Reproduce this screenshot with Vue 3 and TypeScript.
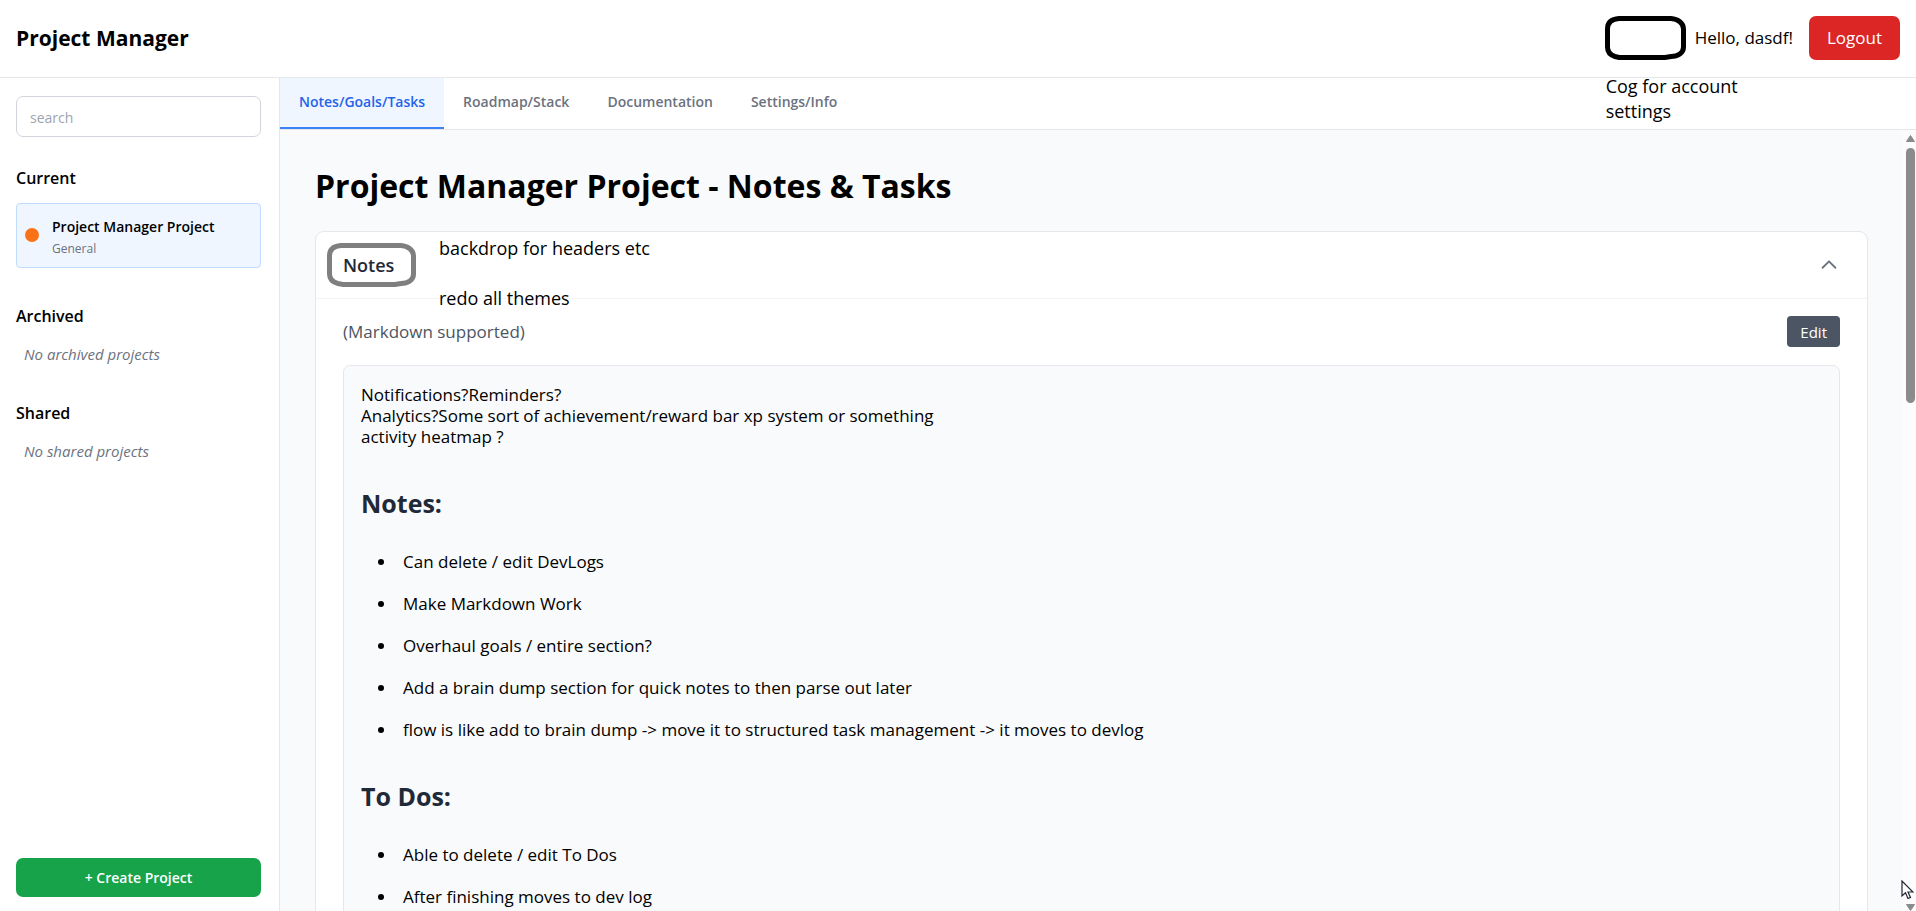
<script setup lang="ts">
import { ref } from 'vue'

interface Section {
  title: string
  items: string[]
}

const tabs = ['Notes/Goals/Tasks', 'Roadmap/Stack', 'Documentation', 'Settings/Info']
const activeTab = ref(tabs[0])
const search = ref('')
const notesOpen = ref(true)

const intro = [
  'Notifications?Reminders?',
  'Analytics?Some sort of achievement/reward bar xp system or something',
  'activity heatmap ?',
]

const sections: Section[] = [
  {
    title: 'Notes:',
    items: [
      'Can delete / edit DevLogs',
      'Make Markdown Work',
      'Overhaul goals / entire section?',
      'Add a brain dump section for quick notes to then parse out later',
      'flow is like add to brain dump -> move it to structured task management -> it moves to devlog',
    ],
  },
  {
    title: 'To Dos:',
    items: ['Able to delete / edit To Dos', 'After finishing moves to dev log'],
  },
]
</script>

<template>
  <div class="app">
    <header class="topbar">
      <h1 class="brand">Project Manager</h1>
      <div class="account">
        <div class="cog-slot">
          <svg class="sketch" viewBox="0 0 81 44" aria-hidden="true">
            <path d="M14 2.5H66C73 3 78.500 7 78.500 13V31C78.500 37 73 40.500 66 40.500L60 41.500H14L10 40.500C5 39 2.500 36 2.500 31V13C2.500 6 7 3 14 2.500Z" fill="none" stroke="#000" stroke-width="5" />
          </svg>
          <p class="annotation cog-note">Cog for account<br />settings</p>
        </div>
        <span class="hello">Hello, dasdf!</span>
        <button type="button" class="logout">Logout</button>
      </div>
    </header>

    <div class="body">
      <aside class="sidebar">
        <input v-model="search" class="search" type="search" placeholder="search" aria-label="search" />

        <section class="group">
          <h2 class="group-title">Current</h2>
          <button type="button" class="project">
            <span class="dot"></span>
            <span class="project-text">
              <span class="project-name">Project Manager Project</span>
              <span class="project-kind">General</span>
            </span>
          </button>
        </section>
        <section class="group">
          <h2 class="group-title">Archived</h2>
          <p class="empty">No archived projects</p>
        </section>
        <section class="group">
          <h2 class="group-title">Shared</h2>
          <p class="empty">No shared projects</p>
        </section>

        <button type="button" class="create">+ Create Project</button>
      </aside>

      <div class="workspace">
        <nav class="tabs">
          <button
            v-for="tab in tabs"
            :key="tab"
            type="button"
            class="tab"
            :class="{ active: tab === activeTab }"
            @click="activeTab = tab"
          >
            {{ tab }}
          </button>
        </nav>

        <div class="scroller">
          <main class="content">
            <h2 class="page-title">Project Manager Project - Notes &amp; Tasks</h2>

            <section class="card">
              <div class="card-head">
                <div class="card-label">
                  <h3 class="card-title">Notes</h3>
                  <svg class="sketch backdrop" viewBox="0 0 89 44" aria-hidden="true">
                    <path d="M14 2.5H74C81 3 86.500 7 86.500 13V31C86.500 37 81 40.500 74 40.500L68 41.500H16L11 40.500C5 39 2.500 36 2.500 31V13C2.500 6 7 3 14 2.500Z" fill="none" stroke="#7f7f7f" stroke-width="5" />
                  </svg>
                  <p class="annotation backdrop-note">backdrop for headers etc<br /><br />redo all themes</p>
                </div>
                <button type="button" class="toggle" aria-label="Toggle notes" @click="notesOpen = !notesOpen">
                  <svg viewBox="0 0 24 24" width="22" height="22" fill="none" stroke="#6b7280" stroke-width="2" stroke-linecap="round" stroke-linejoin="round">
                    <path d="M5 15l7-7 7 7" />
                  </svg>
                </button>
              </div>

              <div v-if="notesOpen" class="card-body">
                <div class="hint-row">
                  <span class="hint">(Markdown supported)</span>
                  <button type="button" class="edit">Edit</button>
                </div>
                <article class="markdown">
                  <p class="intro">
                    <template v-for="line in intro" :key="line">{{ line }}<br /></template>
                  </p>
                  <template v-for="section in sections" :key="section.title">
                    <h4>{{ section.title }}</h4>
                    <ul>
                      <li v-for="item in section.items" :key="item">{{ item }}</li>
                    </ul>
                  </template>
                </article>
              </div>
            </section>
          </main>

          <div class="scrollbar" aria-hidden="true">
            <svg width="9" height="7" viewBox="0 0 9 7"><path d="M4.5 0.5L8.5 6.5H0.5Z" fill="#8b8b8b" stroke="#8b8b8b" stroke-linejoin="round" /></svg>
            <div class="track"><div class="thumb"></div></div>
            <svg width="9" height="7" viewBox="0 0 9 7"><path d="M4.5 6.5L8.5 0.5H0.5Z" fill="#8b8b8b" stroke="#8b8b8b" stroke-linejoin="round" /></svg>
          </div>
        </div>
      </div>
    </div>

    <svg class="pointer" width="13" height="20" viewBox="0 0 13 20" aria-hidden="true">
      <path d="M1 1V16L4.5 12.8L7 18.5L9.5 17.4L7 12H12Z" fill="#fff" stroke="#1f2430" stroke-width="1.2" />
    </svg>
  </div>
</template>

<style>
body {
  margin: 0;
}
</style>

<style scoped>
.app {
  position: relative;
  display: flex;
  flex-direction: column;
  height: 100vh;
  overflow: hidden;
  background: #fff;
  color: #000;
  font-family: "Open Sans", "Noto Sans", sans-serif;
  font-size: 17px;
  line-height: 26px;
}
.app *,
.app {
  box-sizing: border-box;
}
h1,
h2,
h3,
h4,
p,
ul {
  margin: 0;
  padding: 0;
}
button {
  margin: 0;
  border: 0;
  background: none;
  color: inherit;
  font: inherit;
  cursor: pointer;
}

.topbar {
  display: flex;
  align-items: center;
  justify-content: space-between;
  padding: 16px 16px 17px;
  border-bottom: 1px solid #e5e7eb;
}
.brand {
  font-size: 21px;
  line-height: 30px;
  font-weight: 700;
}
.account {
  display: flex;
  align-items: center;
}
.cog-slot {
  position: relative;
  width: 81px;
  height: 44px;
}
.sketch {
  display: block;
  width: 100%;
  height: 100%;
}
.annotation {
  position: absolute;
  font-size: 18px;
  line-height: 25px;
  white-space: nowrap;
}
.cog-note {
  top: 58px;
  left: 1px;
}
.hello {
  margin: 0 16px 0 9px;
}
.logout {
  height: 44px;
  padding: 0 18px;
  border-radius: 7px;
  background: #dc2626;
  color: #fff;
}

.body {
  flex: 1;
  display: flex;
  min-height: 0;
}
.sidebar {
  flex: none;
  display: flex;
  flex-direction: column;
  width: 280px;
  padding: 18px 18px 14px 16px;
  border-right: 1px solid #e5e7eb;
}
.search {
  width: 100%;
  height: 41px;
  margin-bottom: 27px;
  padding: 1px 13px 0;
  border: 1px solid #d1d5db;
  border-radius: 7px;
  outline: 0;
  background: #fff;
  font: 14px/20px "Open Sans", "Noto Sans", sans-serif;
  appearance: none;
}
.search::placeholder {
  color: #9ca3af;
}
.group {
  margin-bottom: 34px;
}
.group-title {
  margin-bottom: 11px;
  font-size: 16px;
  line-height: 28px;
  font-weight: 600;
}
.group + .group .group-title {
  margin-bottom: 6px;
}
.project {
  display: flex;
  align-items: center;
  gap: 13px;
  width: 100%;
  padding: 11px 8px 8px;
  border: 1px solid #bfdbfe;
  border-radius: 4px;
  background: #eff6ff;
  text-align: left;
}
.dot {
  width: 14px;
  height: 14px;
  margin-bottom: 4px;
  border-radius: 50%;
  background: #f97316;
}
.project-text {
  display: flex;
  flex-direction: column;
}
.project-name {
  font-size: 14px;
  line-height: 24px;
  font-weight: 600;
}
.project-kind {
  color: #6b7280;
  font-size: 12px;
  line-height: 20px;
}
.empty {
  padding: 8px;
  color: #6b7280;
  font-size: 15px;
  line-height: 20px;
  font-style: italic;
}
.group + .group {
  margin-bottom: 27px;
}
.create {
  height: 39px;
  margin-top: auto;
  border-radius: 7px;
  background: #16a34a;
  color: #fff;
  font-size: 14px;
  font-weight: 600;
}

.workspace {
  flex: 1;
  display: flex;
  flex-direction: column;
  min-width: 0;
}
.tabs {
  flex: none;
  display: flex;
  border-bottom: 1px solid #e5e7eb;
}
.tab {
  height: 51px;
  padding: 0 19px 2px;
  border-bottom: 2px solid transparent;
  color: #6b7280;
  font-size: 14px;
  font-weight: 600;
}
.tab.active {
  border-bottom-color: #3b82f6;
  background: #eff6ff;
  color: #2563eb;
}

.scroller {
  flex: 1;
  display: flex;
  min-height: 0;
  background: #f9fafb;
}
.content {
  flex: 1;
  min-width: 0;
  overflow: hidden;
  padding: 36px 35px;
}
.page-title {
  margin-bottom: 25px;
  font-size: 32px;
  line-height: 40px;
  font-weight: 700;
}
.card {
  border: 1px solid #e5e7eb;
  border-radius: 9px;
  background: #fff;
}
.card-head {
  display: flex;
  align-items: center;
  justify-content: space-between;
  height: 67px;
  padding: 0 27px;
  border-bottom: 1px solid #f3f4f6;
}
.card-label {
  position: relative;
}
.card-title {
  color: #1f2937;
  font-size: 18px;
  line-height: 30px;
  font-weight: 600;
}
.backdrop {
  position: absolute;
  top: -7px;
  left: -16px;
  width: 89px;
  height: 44px;
}
.backdrop-note {
  top: -14px;
  left: 96px;
}
.toggle {
  display: flex;
  padding: 0;
}
.card-body {
  padding: 17px 27px 26px;
}
.hint-row {
  display: flex;
  align-items: center;
  justify-content: space-between;
  margin-bottom: 18px;
}
.hint {
  color: #4b5563;
}
.edit {
  height: 31px;
  padding: 0 13px;
  border-radius: 4px;
  background: #4b5563;
  color: #fff;
  font-size: 15px;
  line-height: 22px;
}
.markdown {
  padding: 18px 17px;
  border: 1px solid #e5e7eb;
  border-radius: 7px;
  background: #f9fafb;
  line-height: 21px;
}
.markdown h4 {
  margin: 40px 0 32px;
  color: #1f2937;
  font-size: 25px;
  line-height: 32px;
  font-weight: 700;
}
.markdown ul {
  padding-left: 36px;
  list-style: disc;
}
.markdown li {
  padding-left: 6px;
}
.markdown li + li {
  margin-top: 21px;
}

.scrollbar {
  flex: none;
  display: flex;
  flex-direction: column;
  align-items: center;
  width: 13px;
  padding: 5px 1px 0 3px;
  background: #fcfcfc;
}
.scrollbar svg {
  flex: none;
}
.track {
  flex: 1;
  width: 9px;
  margin: 6px 0;
}
.thumb {
  height: 34%;
  border-radius: 5px;
  background: #8b8b8b;
}
.pointer {
  position: absolute;
  right: 2px;
  bottom: 11px;
}
</style>
